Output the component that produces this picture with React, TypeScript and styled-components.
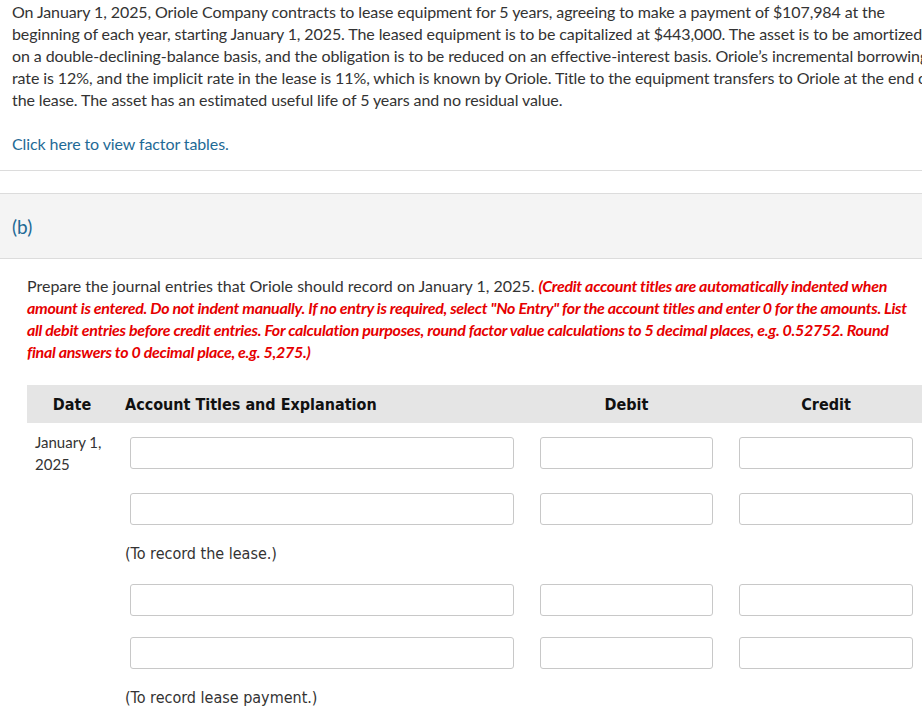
import React from "react";
import styled, { createGlobalStyle } from "styled-components";

const Global = createGlobalStyle`
  html, body { margin: 0; padding: 0; background: #fff; overflow-x: hidden; }
  body { font-family: Lato, "Open Sans", sans-serif; color: #333; }
  * { box-sizing: border-box; }
`;

const Page = styled.div`
  width: 922px;
  overflow: hidden;
`;

const Intro = styled.section`
  width: 950px;
  padding: 1px 0 0 12px;
`;

const Para = styled.p`
  margin: 0;
  width: 928px;
  font-size: 16px;
  letter-spacing: -0.1px;
  line-height: 22px;
  color: #333;
`;

const Link = styled.a`
  display: block;
  margin-top: 22px;
  font-size: 16px;
  letter-spacing: -0.1px;
  line-height: 22px;
  color: #1f6a96;
  text-decoration: none;
  cursor: pointer;
`;

const Rule = styled.hr`
  margin: 15px 0 0;
  border: 0;
  border-top: 1px solid #dcdcdc;
  width: 100%;
`;

const Gap = styled.div`
  height: 22px;
`;

const Band = styled.div`
  height: 66px;
  background: #f4f4f4;
  border-top: 1px solid #dcdcdc;
  border-bottom: 1px solid #dcdcdc;
  display: flex;
  align-items: center;
  padding: 2px 12px 0;
`;

const PartLabel = styled.span`
  font-size: 19px;
  color: #1f6a96;
  line-height: 22px;
`;

const Section = styled.section`
  padding: 16px 0 0 27px;
`;

const Instructions = styled.p`
  margin: 0;
  width: 887px;
  font-size: 16px;
  line-height: 22px;
  color: #333;
`;

const Warn = styled.span`
  color: #e60000;
  font-weight: 700;
  font-style: italic;
  letter-spacing: -0.3px;
`;

const Table = styled.div`
  margin-top: 22px;
  width: 899px;
  font-family: "DejaVu Sans Condensed", "DejaVu Sans", Tahoma, sans-serif;
`;

const Grid = styled.div<{ $pt?: number }>`
  display: grid;
  grid-template-columns: 90px 410px 199px 200px;
  align-items: start;
  padding-top: ${(p) => p.$pt ?? 0}px;
`;

const Head = styled(Grid)`
  background: #e5e5e5;
  height: 38px;
  align-items: center;
`;

const HeadCell = styled.div<{ $align?: string }>`
  font-weight: 700;
  font-size: 16px;
  color: #111;
  text-align: ${(p) => p.$align ?? "center"};
  padding-left: ${(p) => (p.$align === "left" ? "8px" : "0")};
`;

const DateCell = styled.div`
  font-family: Lato, "Open Sans", sans-serif;
  font-size: 15px;
  line-height: 22px;
  color: #333;
  padding: 8px 0 0 8px;
  margin-top: -14px;
`;

const InputCell = styled.div`
  padding: 0 13px;
`;

const Field = styled.input`
  display: block;
  width: 100%;
  height: 32px;
  border: 1px solid #c8c8c8;
  border-radius: 3px;
  background: #fff;
  outline: none;
`;

const Note = styled.div`
  grid-column: 2 / 5;
  padding-left: 8px;
  font-size: 16px;
  line-height: 22px;
  color: #333;
`;

const EntryRow = ({ pt, date }: { pt: number; date?: React.ReactNode }) => (
  <Grid $pt={pt}>
    {date ? <DateCell>{date}</DateCell> : <div />}
    <InputCell><Field /></InputCell>
    <InputCell><Field /></InputCell>
    <InputCell><Field /></InputCell>
  </Grid>
);

const NoteRow = ({ pt, children }: { pt: number; children: React.ReactNode }) => (
  <Grid $pt={pt}>
    <div />
    <Note>{children}</Note>
  </Grid>
);

export default function App() {
  return (
    <Page>
      <Global />
      <Intro>
        <Para>
          On January 1, 2025, Oriole Company contracts to lease equipment for 5 years, agreeing to make a payment of
          $107,984 at the beginning of each year, starting January 1, 2025. The leased equipment is to be capitalized
          at $443,000. The asset is to be amortized on a double-declining-balance basis, and the obligation is to be
          reduced on an effective-interest basis. Oriole’s incremental borrowing rate is 12%, and the implicit rate in
          the lease is 11%, which is known by Oriole. Title to the equipment transfers to Oriole at the end of the
          lease. The asset has an estimated useful life of 5 years and no residual value.
        </Para>
        <Link>Click here to view factor tables.</Link>
      </Intro>
      <Rule />
      <Gap />
      <Band>
        <PartLabel>(b)</PartLabel>
      </Band>
      <Section>
        <Instructions>
          Prepare the journal entries that Oriole should record on January 1, 2025.{" "}
          <Warn>
            (Credit account titles are automatically indented when amount is entered. Do not indent manually. If no
            entry is required, select "No Entry" for the account titles and enter 0 for the amounts. List all debit
            entries before credit entries. For calculation purposes, round factor value calculations to 5 decimal
            places, e.g. 0.52752. Round final answers to 0 decimal place, e.g. 5,275.)
          </Warn>
        </Instructions>
        <Table>
          <Head>
            <HeadCell>Date</HeadCell>
            <HeadCell $align="left">Account Titles and Explanation</HeadCell>
            <HeadCell>Debit</HeadCell>
            <HeadCell>Credit</HeadCell>
          </Head>
          <EntryRow
            pt={14}
            date={
              <>
                January 1,
                <br />
                2025
              </>
            }
          />
          <EntryRow pt={18} />
          <NoteRow pt={18}>(To record the lease.)</NoteRow>
          <EntryRow pt={19} />
          <EntryRow pt={21} />
          <NoteRow pt={18}>(To record lease payment.)</NoteRow>
        </Table>
      </Section>
    </Page>
  );
}
